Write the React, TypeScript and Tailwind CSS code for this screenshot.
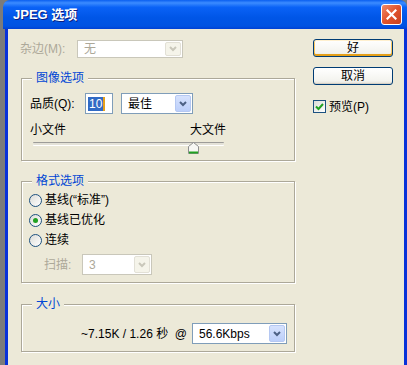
import React from 'react'
import clsx from 'clsx'

const Chevron = ({ disabled }: { disabled?: boolean }) => (
  <svg width="8" height="6" viewBox="0 0 8 6">
    <path d="M1 1l3 3 3-3" fill="none" stroke={disabled ? '#C9C7BA' : '#4D6185'} strokeWidth="2" />
  </svg>
)

const Combo = ({ text, disabled, className }: { text: string; disabled?: boolean; className: string }) => (
  <div
    className={clsx(
      'flex items-stretch border bg-white p-[1px]',
      disabled ? 'border-[#C9C7BA] text-[#ACA899]' : 'border-[#7F9DB9] text-black',
      className
    )}
  >
    <div className="flex flex-1 items-center pl-[5px]">{text}</div>
    <div
      className={clsx(
        'flex w-[16px] items-center justify-center rounded-[2px] border',
        disabled
          ? 'border-[#E2E0D6] bg-[#F5F4EA]'
          : 'border-[#B5C8F2] bg-[linear-gradient(#D6E2FD,#BCCFFA)]'
      )}
    >
      <Chevron disabled={disabled} />
    </div>
  </div>
)

const Radio = ({ checked }: { checked?: boolean }) => (
  <span className="flex h-[13px] w-[13px] items-center justify-center rounded-full border border-[#1C5180] bg-[linear-gradient(135deg,#DCDCD7,#FFFFFF)]">
    {checked && <span className="h-[5px] w-[5px] rounded-full bg-[#21A121]" />}
  </span>
)

const Group = ({ title, className, children }: { title: string; className: string; children: React.ReactNode }) => (
  <div
    className={clsx(
      'ml-[13px] w-[274px] border border-[#ACA899] shadow-[inset_1px_1px_0_#FFFFFF,1px_1px_0_#FFFFFF]',
      className
    )}
  >
    <div className="-mt-[8px] ml-[10px] h-[14px] w-fit bg-[#ECE9D8] px-[4px] leading-[14px] text-[#0046D5]">
      {title}
    </div>
    {children}
  </div>
)

const App = () => {
  return (
    <div className="flex h-[365px] w-[407px] overflow-hidden bg-[#7B7B7B] font-['Liberation_Sans','Noto_Sans_CJK_SC',sans-serif] text-[12px] leading-[14px] text-black">
      <div className="ml-[3px] flex flex-1 flex-col">
        {/* title bar */}
        <div className="flex h-[29px] shrink-0 items-center justify-between rounded-t-[7px] bg-[linear-gradient(#0A5FF0_0%,#3C8CFF_10%,#0A62F6_25%,#0056E7_60%,#0053E2_90%,#0041D4_100%)] pl-[10px] pr-[5px]">
          <span className="text-[13px] font-bold text-white [text-shadow:1px_1px_0_#0A1E80]">JPEG 选项</span>
          <div className="flex h-[21px] w-[21px] items-center justify-center rounded-[3px] border border-white bg-[linear-gradient(135deg,#F08A68,#E0532C_50%,#C8401E)]">
            <svg width="11" height="11" viewBox="0 0 11 11">
              <path d="M1.5 1.5l8 8M9.5 1.5l-8 8" stroke="#FFFFFF" strokeWidth="2.2" strokeLinecap="square" />
            </svg>
          </div>
        </div>

        {/* body */}
        <div className="ml-[2px] flex flex-1 border-x-[3px] border-[#0831D9] bg-[#ECE9D8]">
          <div className="flex w-[305px] shrink-0 flex-col">
            <div className="mt-[11px] flex h-[18px] items-center pl-[12px]">
              <span className="w-[57px] text-[#ACA899]">杂边(M):</span>
              <Combo text="无" disabled className="h-[18px] w-[106px]" />
            </div>

            <Group title="图像选项" className="mt-[20px] pb-[6px]">
              <div className="mt-[8px] flex h-[21px] items-center pl-[8px]">
                <span className="w-[55px]">品质(Q):</span>
                <div className="flex h-[21px] w-[28px] items-center border border-[#7F9DB9] bg-white pl-[2px]">
                  <span className="bg-[#316AC5] px-[1px] text-white">10</span>
                  <span className="h-[14px] w-[2px] bg-[#E5A01A]" />
                </div>
                <Combo text="最佳" className="ml-[8px] h-[21px] w-[72px]" />
              </div>
              <div className="mt-[9px] flex h-[14px] w-[204px] justify-between pl-[8px]">
                <span>小文件</span>
                <span>大文件</span>
              </div>
              <div className="relative mt-[3px] ml-[11px] h-[12px] w-[191px]">
                <div className="mt-[5px] h-[3px] rounded-[1px] border-t border-[#9D9C99] bg-[#E4E2D8] shadow-[0_1px_0_#FFFFFF]" />
                <svg className="absolute left-[155px] top-0" width="11" height="12" viewBox="0 0 11 12">
                  <path d="M5.5 0.5L10.5 4.5V11.5H0.5V4.5Z" fill="#F7F7F4" stroke="#8E8F8F" />
                  <path d="M1 10.5H10" stroke="#21A121" strokeWidth="2" />
                </svg>
              </div>
            </Group>

            <Group title="格式选项" className="mt-[20px] pb-[7px]">
              <div className="mt-[2px] flex h-[20px] items-center gap-[3px] pl-[7px]">
                <Radio />
                <span>基线(“标准”)</span>
              </div>
              <div className="flex h-[20px] items-center gap-[3px] pl-[7px]">
                <Radio checked />
                <span>基线已优化</span>
              </div>
              <div className="flex h-[20px] items-center gap-[3px] pl-[7px]">
                <Radio />
                <span>连续</span>
              </div>
              <div className="mt-[4px] flex h-[21px] items-center pl-[22px]">
                <span className="w-[38px] text-[#ACA899]">扫描:</span>
                <Combo text="3" disabled className="h-[21px] w-[70px]" />
              </div>
            </Group>

            <Group title="大小" className="mt-[21px] pb-[7px]">
              <div className="mt-[12px] flex h-[21px] items-center justify-end gap-[5px] pr-[7px]">
                <span>~7.15K / 1.26 秒 &nbsp;@</span>
                <Combo text="56.6Kbps" className="h-[21px] w-[95px]" />
              </div>
            </Group>
          </div>

          <div className="flex w-[80px] flex-col">
            <button className="mt-[10px] h-[18px] rounded-[3px] border border-[#003C74] bg-[linear-gradient(#FFFFFF,#F3F3EE_80%,#E6E3D8)] shadow-[inset_0_1px_0_#FFF0CF,inset_0_-2px_0_#E5A01A,inset_1px_0_0_#F9C660,inset_-1px_0_0_#F9C660]">
              好
            </button>
            <button className="mt-[10px] h-[18px] rounded-[3px] border border-[#003C74] bg-[linear-gradient(#FFFFFF,#F3F3EE_80%,#E3E0D6)] shadow-[inset_0_-1px_0_#D6D0C5]">
              取消
            </button>
            <div className="mt-[15px] flex h-[13px] items-center gap-[3px]">
              <span className="flex h-[13px] w-[13px] items-center justify-center border border-[#1C5180] bg-[linear-gradient(135deg,#DCDCD7,#FFFFFF)]">
                <svg width="9" height="9" viewBox="0 0 9 9">
                  <path d="M1 4.5l2.5 2.5L8 2" fill="none" stroke="#21A121" strokeWidth="2" />
                </svg>
              </span>
              <span>预览(P)</span>
            </div>
          </div>
        </div>
      </div>
    </div>
  )
}

export default App
